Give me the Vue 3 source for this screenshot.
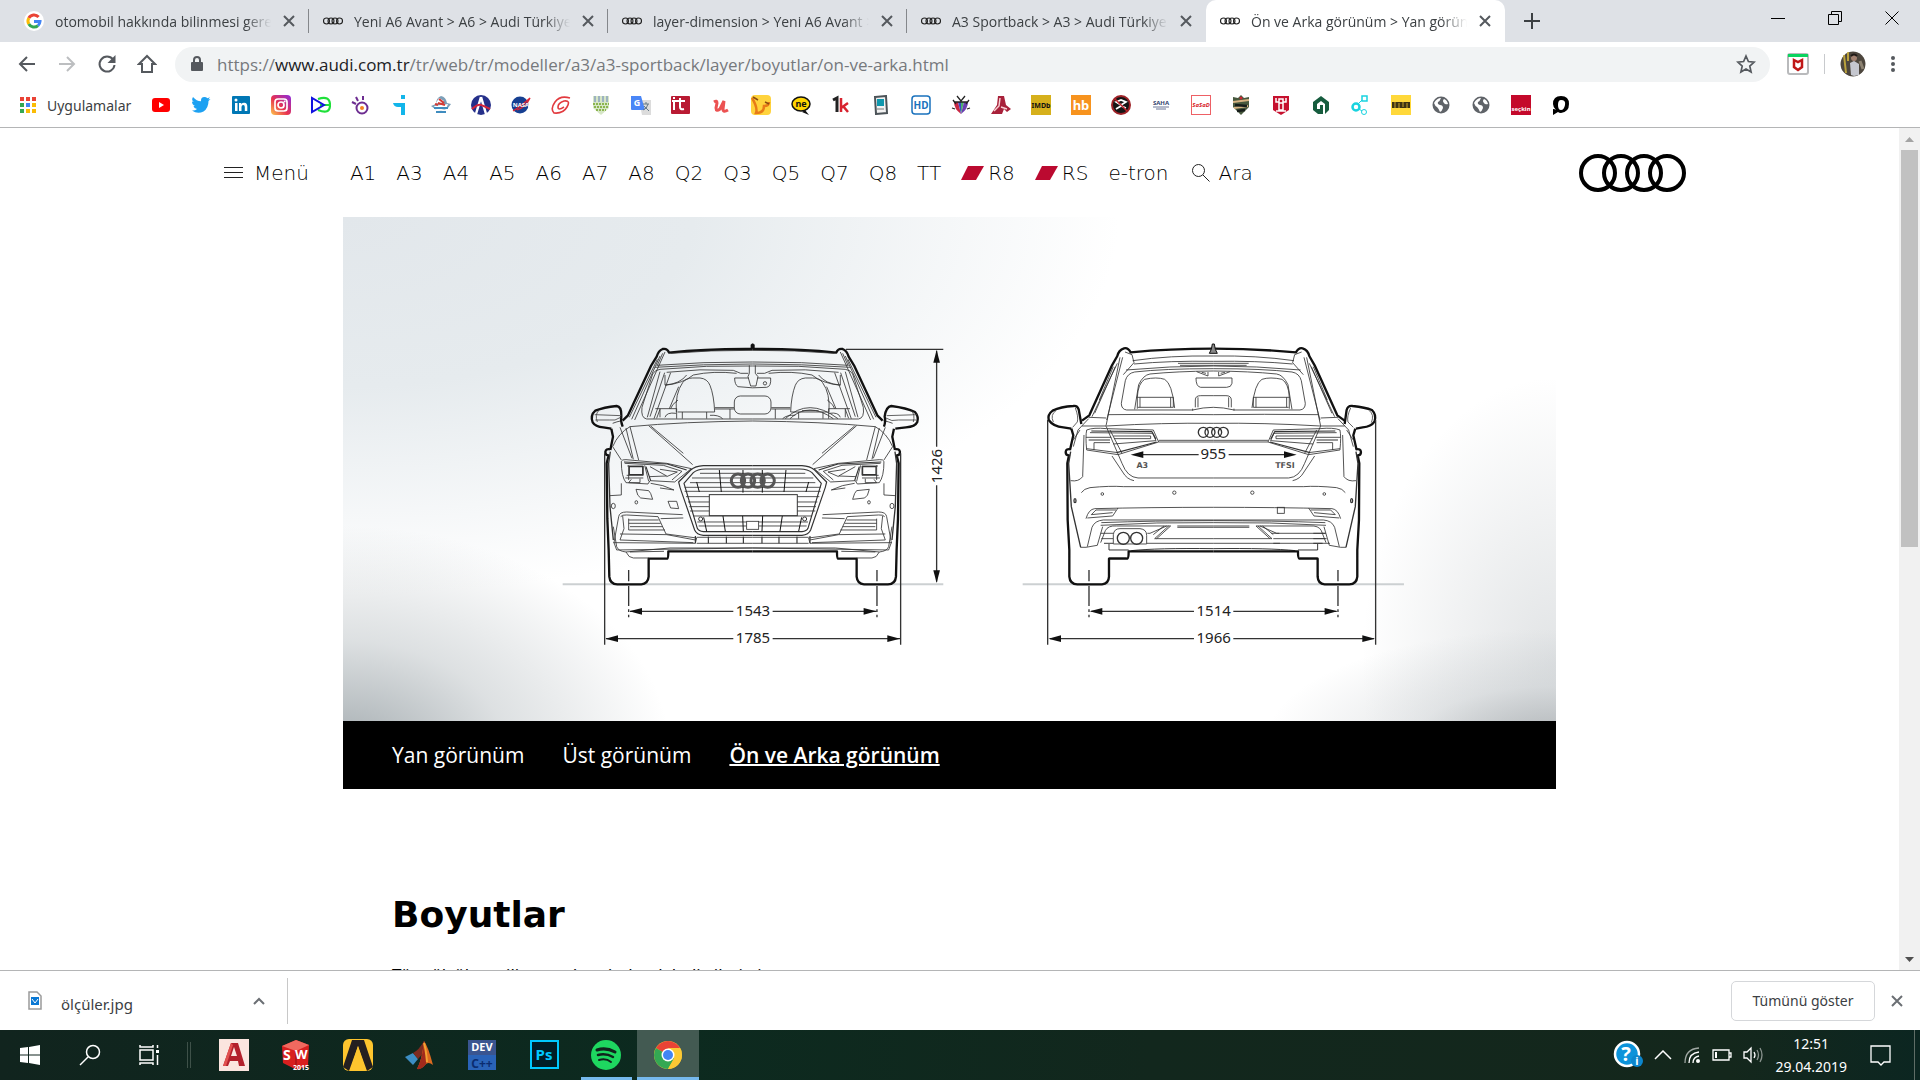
<script setup>
const rings = '<g fill="none" stroke="#222" stroke-width="1.100"><circle cx="3.500" cy="10" r="3"/><circle cx="8" cy="10" r="3"/><circle cx="12" cy="10" r="3"/><circle cx="16.500" cy="10" r="3"/></g>'
const google = '<circle cx="10" cy="10" r="10" fill="#fff"/><g fill="none" stroke-width="3"><path d="M14.6 6A6 6 0 0 0 4.8 7" stroke="#ea4335"/><path d="M4.8 7A6 6 0 0 0 4.8 13" stroke="#fbbc05"/><path d="M4.8 13A6 6 0 0 0 14 14.6" stroke="#34a853"/><path d="M14 14.6A6 6 0 0 0 16 10.5H10" stroke="#4285f4"/></g>'

const tabs = [
  { title: 'otomobil hakkında bilinmesi gereken', icon: google },
  { title: 'Yeni A6 Avant > A6 > Audi Türkiye', icon: rings },
  { title: 'layer-dimension > Yeni A6 Avant >', icon: rings },
  { title: 'A3 Sportback > A3 > Audi Türkiye', icon: rings },
  { title: 'Ön ve Arka görünüm > Yan görünüm', icon: rings, active: true }
]

const globe = '<circle cx="10" cy="10" r="8.5" fill="#5f6368"/><path d="M3 8q3-5 7-5q-1 3-3 4q-1 2 2 3q3 0 3 3q-1 3-3 4q-1-3-3-5q-2-1-3-4zM13 4q3 1 4 5q-3 1-4-1q-2-2 0-4z" fill="#fff"/>'
const label = (t, size, color, y = 13, extra = '') =>
  `<text x="10" y="${y}" font-size="${size}" font-weight="700" text-anchor="middle" fill="${color}" ${extra}>${t}</text>`

const bookmarks = [
  { name: 'YouTube', svg: '<rect x="1" y="3" width="18" height="14" rx="3" fill="#f00"/><path d="M8 7v6l5-3z" fill="#fff"/>' },
  { name: 'Twitter', svg: '<path d="M1 15.500q3 .3 5-1.500q-3-.3-3.500-3h1.500Q1 9.500 1 6.500l1.800.5Q0 5 2 2q3.500 4.200 8 4.300Q9.600 2 13.500 2q1.700 0 2.900 1.200L19 2.200l-1.700 2.300L19.500 4l-2 2Q17.500 13 12.500 16.500Q6.500 19.500 1 15.500z" fill="#1da1f2"/>' },
  { name: 'LinkedIn', svg: '<rect x="1" y="1" width="18" height="18" rx="1" fill="#0077b5"/><g fill="#fff"><circle cx="5" cy="5" r="1.500"/><path d="M4 8h2.500v8H4zM8 8h2.300v1.200q1-1.500 3-1.400q3 .2 3 3.700V16h-2.500v-4q0-2-1.600-2T10.500 12v4H8z"/></g>' },
  { name: 'Instagram', svg: '<defs><linearGradient id="ig" x1="0" y1="1" x2="1" y2="0"><stop offset="0" stop-color="#fdc94c"/><stop offset=".45" stop-color="#e8324f"/><stop offset="1" stop-color="#8a2be0"/></linearGradient></defs><rect x="0" y="0" width="20" height="20" rx="4" fill="url(#ig)"/><g fill="none" stroke="#fff" stroke-width="1.700"><rect x="4" y="4" width="12" height="12" rx="3"/><circle cx="10" cy="10" r="3"/></g><circle cx="13.600" cy="6.400" r="1" fill="#fff"/>' },
  { name: 'DE', svg: '<path d="M7 4q12-4 12 6t-12 5M9 10h10" fill="none" stroke="#1fe03a" stroke-width="2.200"/><path d="M1 3v14L13 10z" fill="none" stroke="#1212e0" stroke-width="2"/>' },
  { name: 'Ses', svg: '<g fill="none" stroke="#6d2d91" stroke-width="2"><circle cx="11" cy="13" r="5.500"/><path d="M1 7l4 2M5 2l2 4M12 1v4"/></g><circle cx="11" cy="13" r="2" fill="#f58220"/>' },
  { name: 'Teknik', svg: '<path d="M10 0h4v4h-4zM2 8h12v12h-4v-8H7q-4 0-5-4z" fill="#12b5ea"/>' },
  { name: 'Havacılık', svg: '<path d="M10 1q5 1 6 7l4 1-3 4q-6 4-13 1L0 11l5-2q0-6 5-8z" fill="#7c9fb8"/><path d="M3 11l14-2-2 5-9 2zM8 3l5 3-4 3-4-1z" fill="#fff"/><path d="M7 8l7 2M4 9l3 1M8 4l5 4" stroke="#d43a34" stroke-width="2"/><path d="M3 13h14M5 17h10" stroke="#3f8cbf" stroke-width="2"/>' },
  { name: 'Mercek', svg: '<circle cx="10" cy="10" r="10" fill="#25308a"/><path d="M10 2L5 19M10 2l5 17" fill="none" stroke="#fff" stroke-width="2.500"/><path d="M1 14q6-5 9-4t9 4" fill="none" stroke="#d4233a" stroke-width="2"/>' },
  { name: 'NASA', svg: '<circle cx="9" cy="10" r="8.500" fill="#163f91"/><path d="M2 16Q9 12 19 3q-4 9-13 12" fill="none" stroke="#e02432" stroke-width="1.300"/>' + label('NASA', 6, '#fff', 12) },
  { name: 'Yörünge', svg: '<g fill="none" stroke="#e23a3f" stroke-width="1.600"><path d="M19 3Q9 0 4 7T3 18Q12 19 16 12T13 6Q7 8 7 12T13 12"/></g>' },
  { name: 'Fakülte', svg: '<path d="M2 1h16v12l-8 7-8-7z" fill="#d6e6c6"/><path d="M4 1v6M8 1v6M12 1v6M16 1v6" stroke="#9db3c0" stroke-width="2"/><path d="M2 9h16M3 12h14M5 15h10" stroke="#8bb54e" stroke-dasharray="2 1" stroke-width="2"/>' },
  { name: 'Çeviri', svg: '<path d="M8 5h12v15H11z" fill="#dcdcdc"/><path d="M0 1h10l4 14H1q-1 0-1-1z" fill="#4a86f7"/><path d="M12 9h6M15 7v2M17 9q-1 5-5 6M13 11l5 5" stroke="#657a86" fill="none"/><text x="6" y="11" text-anchor="middle" font-size="9" font-weight="700" fill="#fff">G</text>' },
  { name: 'it', svg: '<rect x="0" y="1" width="19" height="18" rx="1" fill="#b91a33"/><path d="M3 2v2M3 7v8M1 6h13M9 3v9q0 3 4 2" stroke="#fff" stroke-width="2" fill="none"/>' },
  { name: 'Udemy', svg: '<path d="M3 7q3-2 3 1L5 13q0 4 4 1l4-8-1 8q0 4 5 1" fill="none" stroke="#ec5252" stroke-width="3"/>' },
  { name: 'Sözlük', svg: '<rect width="20" height="20" rx="4" fill="#ffd33d"/><path d="M1 3q6 10 4 15 8 0 8-7 5 0 5-4" stroke="#e77b18" fill="none" stroke-width="2.500"/><path d="M2 2l5 3M14 7l4 2" stroke="#8b4d13" stroke-width="1.500"/>' },
  { name: 'ne', svg: '<path d="M14 15l4 5-7-3z" fill="#111"/><ellipse cx="10" cy="9" rx="9" ry="7" fill="#ffd500" stroke="#111" stroke-width="1.500"/>' + label('ne', 9, '#111', 12) },
  { name: '1k', svg: '<path d="M2 5l4-2v14" fill="none" stroke="#222" stroke-width="3"/><path d="M10 3v14M17 8l-7 5M12 11l5 6" fill="none" stroke="#d8232f" stroke-width="2.500"/>' },
  { name: 'Dergi', svg: '<path d="M4 2l11-1 1 17-11 1z" fill="#f2f2f2" stroke="#4c5358" stroke-width="2"/><path d="M6 4h7v7H6z" fill="#0f97ad"/><path d="M6 14h7" stroke="#777"/>' },
  { name: 'HD', svg: '<rect x="1" y="1" width="18" height="18" rx="3" fill="#fff" stroke="#1a72bd" stroke-width="1.500"/>' + label('HD', 10, '#1a72bd', 14) },
  { name: 'TV', svg: '<path d="M3 7h4l3 12q-7-5-7-12z" fill="#c92844"/><path d="M7 7h3v12z" fill="#3c48c4"/><path d="M10 7h3l-3 12z" fill="#48b26b"/><path d="M13 7h4q0 7-7 12z" fill="#6a3fb0"/><path d="M6 1l4 5 4-5M3 7h14M1 13l3 1M19 13l-3 1M2 5l3 4M18 5l-3 4" stroke="#222" stroke-width="1.300" fill="none"/>' },
  { name: 'Mühendis', svg: '<path d="M7 1h6l2 9 5 4-4 3-3-3-2 5H0l6-9z" fill="#a8213a"/><path d="M9 3l-1 8-5 5M10 12l6 2" stroke="#f7ced2" fill="none" stroke-width="1.500"/>' },
  { name: 'IMDb', svg: '<rect y="0" width="20" height="20" fill="#d6b01c"/>' + label('IMDb', 7, '#111') },
  { name: 'hb', svg: '<rect width="20" height="20" fill="#f7931e"/>' + label('hb', 13, '#fff', 15) },
  { name: 'Kulüp', svg: '<circle cx="10" cy="10" r="9" fill="#151515" stroke="#9d2227" stroke-width="2"/><path d="M5 7l5-2 5 2-5 3zM5 14l5-3 5 2" stroke="#fff" fill="none" stroke-width="1.700"/><path d="M4 4l12 12" stroke="#c2222b" stroke-width="1.500"/>' },
  { name: 'SAHA', svg: label('SAHA', 6, '#34456f', 10) + '<path d="M2 12h16M5 14h10" stroke="#6c7797"/>' },
  { name: 'SaSaD', svg: '<rect x=".5" y=".5" width="19" height="19" fill="#fff" stroke="#ee6065"/>' + label('SaSaD', 6, '#d7232a', 12, 'font-style="italic"') },
  { name: 'Savunma', svg: '<path d="M10 0l3 3 5-1v10l-8 8-8-8V2l5 1z" fill="#47583d"/><path d="M2 7l16-2M3 13l14-2" stroke="#d8b383" stroke-width="2"/><path d="M4 10l12 1M6 16l8-1" stroke="#161d1a" stroke-width="2.500"/><circle cx="10" cy="3" r="1.500" fill="#ce2733"/>' },
  { name: 'Üniversite', svg: '<path d="M2 1h16v14l-8 5-8-5z" fill="#c6102e"/><path d="M5 3v4h3V4h4v3h3V3M8 8h4v7H8zM5 16h10" stroke="#fff" stroke-width="1.500" fill="none"/>' },
  { name: 'Ev', svg: '<path d="M10 1l8 6v8l-4 4V9l-4-3-4 3v5h3v-4h3v9H7l-5-4V7z" fill="#165c3e"/>' },
  { name: 'Bağ', svg: '<g fill="none" stroke="#18d3df"><circle cx="5" cy="12" r="3.500" stroke-width="2.500"/><rect x="11" y="1" width="5" height="5" stroke-width="1.500"/><circle cx="13" cy="17" r="2.500"/><path d="M7 9l4-4M8 14l3 2"/></g>' },
  { name: 'Arı', svg: '<rect width="20" height="20" fill="#ffd83a"/><path d="M1 7h18v6H1z" fill="#3d3313"/><path d="M4 7v6M8 8v5M12 7v5M16 8v5" stroke="#c7a22a"/>' },
  { name: 'Site 1', svg: globe },
  { name: 'Site 2', svg: globe },
  { name: 'seçkin', svg: '<rect width="20" height="20" fill="#c4092b"/>' + label('seçkin', 6, '#fff', 16) },
  { name: 'P', svg: '<path d="M10 1q8 0 8 8t-8 9q-2 0-3-1l-5 3v-6q2 0 3 1-3-3-3-6 0-8 8-8zM10 5q-3 0-3 5t3 5 4-5-4-5z" fill="#000"/>' }
]

const models = [
  { name: 'A1' }, { name: 'A3' }, { name: 'A4' }, { name: 'A5' }, { name: 'A6' }, { name: 'A7' }, { name: 'A8' },
  { name: 'Q2' }, { name: 'Q3' }, { name: 'Q5' }, { name: 'Q7' }, { name: 'Q8' }, { name: 'TT' },
  { name: 'R8', sport: true }, { name: 'RS', sport: true }, { name: 'e-tron' }
]

const views = [
  { name: 'Yan görünüm' },
  { name: 'Üst görünüm' },
  { name: 'Ön ve Arka görünüm', active: true }
]

const apps = [
  { name: 'AutoCAD', svg: '<rect x="1" width="30" height="32" fill="#fbe5df"/><path d="M5 27L13 4h7l7 23h-6l-1-5h-8l-2 5zM13 17h6l-3-9z" fill="#b3202c"/><path d="M5 27l8-23 2 2-7 21z" fill="#e2504f"/>' },
  { name: 'SolidWorks', svg: '<path d="M2 7L16 1l13 5-1 21-11 4L3 24z" fill="#d81f1f"/><path d="M2 7l14-6 13 5-13 6z" fill="#f0695f"/><path d="M16 12v18" stroke="#8e0f14"/><g fill="#fff" font-weight="700"><text x="3" y="21" font-size="14">S</text><text x="15" y="20" font-size="13">W</text><text x="13" y="31" font-size="7">2015</text></g>' },
  { name: 'ANSYS', svg: '<rect x="1" width="30" height="32" rx="6" fill="#fec52e"/><path d="M10 1h12l9 27-6 4L16 7 7 32 1 28z" fill="#241f20"/><path d="M16 7l8 25H8z" fill="#fec52e"/>' },
  { name: 'MATLAB', svg: '<path d="M1 18l8-4 5 6-5 6z" fill="#3d8ec4"/><path d="M9 14Q15 11 20 2l2 9-8 9z" fill="#7e2b20"/><path d="M20 2q4 5 9 24-5-4-8 0-3 4-8 4 5-9 7-28z" fill="#dd6b20"/><path d="M20 2q3 10 2 23-4 6-9 5 6-12 7-28z" fill="#a22a1c"/><path d="M20 4q2 7 3 19" stroke="#f4a233" stroke-width="2" fill="none"/>' },
  { name: 'Dev-C++', svg: '<rect x="2" y="1" width="28" height="30" fill="#2a63b8"/><rect x="2" y="1" width="28" height="15" fill="#3a5590"/><g font-weight="700" text-anchor="middle"><text x="16" y="12" font-size="11" fill="#fff">DEV</text><text x="16" y="29" font-size="12" fill="#0b2c70">C++</text></g>' },
  { name: 'Photoshop', svg: '<rect x="3" y="2" width="27" height="27" fill="#001d26" stroke="#00c8ff" stroke-width="2"/><text x="16" y="21" font-size="15" font-weight="700" text-anchor="middle" fill="#00c8ff">Ps</text>' },
  { name: 'Spotify', open: true, svg: '<circle cx="16" cy="16" r="15" fill="#1ed760"/><g fill="none" stroke="#10231c" stroke-linecap="round"><path d="M7 11q9-3 18 2" stroke-width="3"/><path d="M8 16q8-2 15 2" stroke-width="2.500"/><path d="M9 21q7-2 12 2" stroke-width="2"/></g>' },
  { name: 'Chrome', open: true, current: true, svg: '<circle cx="16" cy="16" r="14" fill="#fcc934"/><path d="M16 16L3.900 9A14 14 0 0 1 28.100 9z" fill="#ea4335"/><path d="M16 16L3.900 9A14 14 0 0 0 16 30l6-10.500z" fill="#34a853"/><path d="M16 9h12.100A14 14 0 0 1 16 30l6-10.500z" fill="#fcc934"/><circle cx="16" cy="16" r="6.500" fill="#fff"/><circle cx="16" cy="16" r="5" fill="#4285f4"/>' }
]
</script>

<template>
  <div class="desktop">
    <header class="tabstrip">
      <div v-for="t in tabs" :key="t.title" class="tab" :class="{ active: t.active }">
        <svg class="favicon" viewBox="0 0 20 20" v-html="t.icon" />
        <span class="tab-title">{{ t.title }}</span>
        <button class="tab-close" aria-label="Kapat">
          <svg width="12" height="12" viewBox="0 0 12 12"><path d="M1 1l10 10M11 1L1 11" stroke="#55595e" stroke-width="2" /></svg>
        </button>
      </div>
      <button class="new-tab" aria-label="Yeni sekme">
        <svg width="16" height="16" viewBox="0 0 16 16"><path d="M8 0v16M0 8h16" stroke="#3c4043" stroke-width="2" /></svg>
      </button>
      <div class="window-buttons">
        <button aria-label="Küçült"><svg width="14" height="14" viewBox="0 0 14 14"><path d="M0 7.500h14" stroke="#000" /></svg></button>
        <button aria-label="Geri yükle"><svg width="14" height="14" viewBox="0 0 14 14"><path d="M.5 3.500h10v10H.5zM3.500 3V.5h10v10H11" fill="none" stroke="#000" /></svg></button>
        <button aria-label="Kapat"><svg width="14" height="14" viewBox="0 0 14 14"><path d="M.5.5l13 13M13.500.5l-13 13" stroke="#000" /></svg></button>
      </div>
    </header>

    <div class="toolbar">
      <button class="tool" aria-label="Geri"><svg width="20" height="20" viewBox="0 0 20 20"><path d="M18 10H3M10 3l-7 7 7 7" /></svg></button>
      <button class="tool dim" aria-label="İleri"><svg width="20" height="20" viewBox="0 0 20 20"><path d="M2 10h15M10 3l7 7-7 7" /></svg></button>
      <button class="tool" aria-label="Yenile"><svg width="20" height="20" viewBox="0 0 20 20"><path d="M16 5.500A7.500 7.500 0 1 0 17.500 11" /><path d="M18.500 1v8h-8z" fill="#55595e" stroke="none" /></svg></button>
      <button class="tool" aria-label="Ana sayfa"><svg width="20" height="20" viewBox="0 0 20 20"><path d="M2 10l8-8 8 8h-3v8H5v-8z" /></svg></button>
      <div class="omnibox">
        <svg class="lock" width="12" height="16" viewBox="0 0 12 16"><rect y="6" width="12" height="9" rx="1" fill="#55595e" /><path d="M3 7V4a3 3 0 0 1 6 0v3" fill="none" stroke="#55595e" stroke-width="2" /></svg>
        <a class="url" href="#">https://<b>www.audi.com.tr</b>/tr/web/tr/modeller/a3/a3-sportback/layer/boyutlar/on-ve-arka.html</a>
        <svg class="star" width="20" height="20" viewBox="0 0 20 20"><path d="M10 2l2.400 5.500 5.800.6-4.400 4 1.300 5.900L10 15l-5.100 3 1.300-5.900-4.400-4 5.800-.6z" fill="none" stroke="#55595e" stroke-width="1.700" /></svg>
      </div>
      <svg class="shield" width="22" height="22" viewBox="0 0 22 22"><rect x="1" y="1" width="20" height="20" rx="2" fill="#fff" stroke="#b9babc" stroke-width="2" /><path d="M1 1h20v3H1z" fill="#0bd45f" /><path d="M7 7l4 2 4-2v7l-4 3-4-3z" fill="none" stroke="#c01818" stroke-width="2.500" /></svg>
      <span class="tool-divider" />
      <svg class="avatar" width="26" height="26" viewBox="0 0 26 26"><circle cx="13" cy="13" r="12.500" fill="#4d463d" /><path d="M4 4l2 18M8 1v9" stroke="#bba23c" stroke-width="2" /><path d="M10 12l4-2 5 3v11l-5 1-3-1z" fill="#c5c7cf" /><circle cx="14" cy="7" r="3" fill="#a38170" /><path d="M11 5q3-3 6 0" stroke="#201a17" stroke-width="2" fill="none" /><path d="M20 10l3 8" stroke="#8d8372" stroke-width="3" /></svg>
      <button class="kebab" aria-label="Menü"><svg width="6" height="18" viewBox="0 0 6 18" fill="#55595e"><circle cx="3" cy="3" r="2" /><circle cx="3" cy="9" r="2" /><circle cx="3" cy="15" r="2" /></svg></button>
    </div>

    <nav class="bookmarks">
      <a href="#" class="apps-link">
        <svg width="17" height="17" viewBox="0 0 17 17">
          <path d="M0 0h4v4H0zM6 0h4v4H6zM12 0h4v4h-4z" fill="#ea4335" /><path d="M0 6h4v4H0z" fill="#34a853" /><path d="M6 6h4v4H6z" fill="#4285f4" /><path d="M12 6h4v4h-4zM6 12h4v4H6zM12 12h4v4h-4z" fill="#fbbc05" /><path d="M0 12h4v4H0z" fill="#34a853" />
        </svg>
        Uygulamalar
      </a>
      <a v-for="b in bookmarks" :key="b.name" href="#" class="bookmark" :aria-label="b.name">
        <svg width="20" height="20" viewBox="0 0 20 20" v-html="b.svg" />
      </a>
    </nav>

    <div class="viewport">
      <main class="page">
        <div class="site-header">
          <button class="menu-button">
            <svg width="20" height="13" viewBox="0 0 20 13"><path d="M0 1.500h19M0 6.500h19M0 11.500h19" stroke="#222" /></svg>
            Menü
          </button>
          <nav class="models">
            <a v-for="m in models" :key="m.name" href="#">
              <svg v-if="m.sport" width="23" height="14" viewBox="0 0 23 14"><path d="M7 0h16l-8 14H0z" fill="#bb0a30" /></svg>{{ m.name }}
            </a>
          </nav>
          <button class="search">
            <svg width="18" height="18" viewBox="0 0 18 18"><g fill="none" stroke="#222"><circle cx="6.500" cy="6.500" r="6" /><path d="M11 11l6.500 6.500" /></g></svg>
            Ara
          </button>
          <a class="logo" href="#" aria-label="Audi">
            <svg width="108" height="38" viewBox="0 0 108 38"><g fill="none" stroke="#000" stroke-width="4"><circle cx="19" cy="19" r="17" /><circle cx="42" cy="19" r="17" /><circle cx="65" cy="19" r="17" /><circle cx="88" cy="19" r="17" /></g></svg>
          </a>
        </div>

        <section class="hero">
          <svg class="drawing" viewBox="0 0 1213 504" role="img" aria-label="Ön ve arka görünüm">
            <defs>
              <g id="front-half" fill="none" stroke="#333" stroke-width="2.500" stroke-linejoin="round">
                <g stroke="#111" stroke-width="7">
                  <path d="M608 87Q470 86 357 98Q352 84 338 87Q325 92 320 110L304 136L234 286L218 302" />
                  <path d="M184 326L189 350L181 390" />
                  <path d="M180 388q-12 -3 -14 8q0 10 10 10L170 430L172 596L176 690L178 770Q180 793 202 793H274Q294 792 296 770V716H352Q355 715 355 694H608" />
                </g>
                <path d="M181 395L176 430L180 560L190 660" stroke-width="4" />
                <path d="M362 100Q480 90 608 91M320 136Q460 125 608 126M314 142Q460 132 608 132M338 100L322 136M330 108L245 298M345 96L254 300M322 118L238 292" />
                <path d="M608 138Q470 135 330 148Q314 150 308 162L276 262Q272 294 290 297H608" />
                <path d="M330 155L292 292M362 158L312 296M344 158L300 290M350 157Q450 145 550 151L572 160H595M345 165V195Q390 192 410 165M345 196Q400 190 430 165Q490 152 560 160" />
                <path d="M316 266H380V296M330 266V292M495 263H552M495 267H552M540 267V296M345 292Q350 276 378 280M320 295L330 268" />
                <path d="M379 276Q375 220 398 188Q408 174 428 174H450Q472 176 480 196Q492 226 494 276H383M397 276V296M470 276V296M384 240Q364 255 362 266M386 200L358 266M480 286Q505 284 518 296" />
                <path d="M608 303Q400 305 240 320Q205 340 188 380M296 317L428 434M302 318L400 400M240 320L266 420M228 324L250 418M210 322L246 415M188 380L214 420M188 310Q200 305 216 302" />
                <path d="M214 424Q216 418 228 419L350 430L424 446L374 486L300 482L294 492L228 488Q214 470 214 424zM224 430L340 436L396 454L366 480M236 436V480M284 436L296 484M232 438H280V466H230M300 440L350 468L298 470M330 448L382 456L350 470M226 474H280M244 478L236 488H270V476M214 490V525L180 527" />
                <path d="M238 440H278V464H238zM288 440L302 482M222 426L352 432L410 450" stroke-width="3.500" />
                <path d="M608 437H460Q436 438 422 450L386 486L390 502L434 630Q440 644 460 646H608M608 447H466Q442 448 430 458L402 490L442 625Q446 634 460 635H608" stroke-width="3.500" />
                <path d="M450 460H608M426 474H608M420 488H608M404 502H608M404 514H608M408 530H478M414 546H478M418 560H478M420 573H478M430 588H608M442 606H590M446 618H590" />
                <path d="M508 450L514 516M579 450V518M440 486L448 516M461 592L470 634M519 588L526 634M578 588L580 634M475 650V670M529 650V670M580 650V670M436 648V670" stroke="#111" stroke-width="3" />
                <path d="M302 490Q340 494 372 510L330 504M258 508L296 512Q302 516 308 538L272 534Q262 530 258 508z" />
                <ellipse cx="259" cy="547" rx="4" ry="5" /><ellipse cx="190" cy="558" rx="6" ry="8" /><circle cx="452" cy="597" r="6" stroke-width="3" />
                <path d="M398 584Q310 580 230 576Q208 576 206 590L192 668L200 690L608 684M212 590Q216 584 230 585L324 590L348 642L440 654L436 670L190 668M218 588L222 626L210 660L430 668M236 596V630H345M236 600H326M236 610H332M240 620H338M332 596L400 594M210 642L350 644L436 660M190 620L200 680Q205 694 228 696L360 684L608 684M440 652H608M440 670H608M228 696Q236 714 250 714H296M240 696L342 694" />
              </g>
              <g id="rear-half" fill="none" stroke="#333" stroke-width="2.500" stroke-linejoin="round">
                <g stroke="#111" stroke-width="7">
                  <path d="M610 86Q480 86 362 97Q354 82 342 85Q326 90 322 108L306 136L238 286L216 302" />
                  <path d="M184 326L190 346L180 390" />
                  <path d="M182 388q-14 -3 -15 8q0 10 10 10L172 430L173 600L178 690V770Q180 793 202 793H276Q296 792 297 770V716H352Q356 715 356 694H610" />
                </g>
                <path d="M182 395L176 430L184 560L212 682" stroke-width="4" />
                <path d="M368 122Q480 106 610 108M372 132Q480 122 610 124M345 96L366 104L372 128L340 164M330 112L288 318L336 430Q352 472 384 474H610M338 112L290 300M322 130L246 290M316 140L254 280M310 140L268 240M504 130H610M510 136H610M348 150Q480 138 610 138" />
                <path d="M610 146Q460 146 374 156Q352 160 346 182L334 250Q334 268 350 270H548Q580 262 610 262M548 266V272M610 153Q500 154 420 162Q400 165 386 194L374 268M294 284Q460 282 610 284M290 318Q460 308 610 310" />
                <path d="M382 266V232Q384 190 404 178Q440 170 464 178Q486 190 494 264M380 232H490V262H384M390 232V262M482 232V262M556 262V240Q556 227 572 227H610M564 232V262M560 155L594 168V156M575 157L588 160" />
                <path d="M236 292L288 294M236 296L204 330L190 380M216 318L288 318M230 330Q250 322 290 326L430 330L446 366L324 404L230 390Q226 350 230 330zM240 338L428 340L438 362L310 372M310 348H422V356H312M252 390V368H300M228 352H304M222 345L218 470Q206 486 182 482M446 366H610M210 330L190 360M230 386L324 398M300 330L336 400M306 408L338 456Q350 478 372 482M446 361H610" />
                <path d="M244 333L426 335L438 358M236 360H300M320 398L440 366" stroke-width="3.500" />
                <path d="M340 500H610M214 518Q222 506 240 503Q300 497 340 500M228 596Q236 568 254 566Q420 562 610 562M324 564L308 588L232 594M244 584L258 570H318M244 584L308 578" />
                <path d="M232 680L246 622Q254 602 280 600L610 600M274 608Q430 602 610 602M272 616Q440 606 610 608M272 668L286 632Q294 616 320 618L482 618L440 656M278 620L262 676L228 682L212 682M476 618L434 656H610M470 618L420 640H412M502 618H610M502 622H610M272 640H310M274 656H310M410 670H610M462 618L430 644" />
                <path d="M297 672V690M297 690H356M297 714H350M364 692Q440 684 610 686M282 670H310" stroke="#111" />
                <ellipse cx="277" cy="522" rx="4" ry="4" /><circle cx="493" cy="518" r="5" /><ellipse cx="195" cy="542" rx="3" ry="6" stroke-width="4" />
              </g>
              <g id="arrow-left"><path d="M0 0l38 -10v20z" fill="#111" /></g>
            </defs>

            <g transform="translate(207 103) scale(0.3333)">
              <path d="M38 793H1180" stroke="#ccd0d2" stroke-width="6" />
              <use href="#front-half" /><use href="#front-half" transform="translate(1216 0) scale(-1 1)" />
              <g fill="none" stroke="#111" stroke-width="7" stroke-linejoin="round">
                <path d="M218 320Q211 302 214 287Q215 260 200 258Q162 262 136 272Q120 286 128 307Q136 320 160 322L184 326" />
                <path d="M1002 320Q1008 302 1004 290Q1008 260 1024 258Q1070 264 1095 276Q1107 290 1102 306Q1096 320 1068 322L1036 326" />
              </g>
              <path d="M134 284L214 287M136 300H178Q195 304 212 292M1102 284L1010 287M1098 300H1046Q1024 306 1008 294M146 272Q134 284 142 306M1084 272Q1096 284 1090 306" fill="none" stroke="#444" stroke-width="2.500" />
              <path d="M603 86V74q5-6 10 0v12z" fill="#111" stroke="#111" stroke-width="2" />
              <g fill="none" stroke="#333" stroke-width="2.500">
                <path d="M598 136V160L594 170 602 198H618L624 170 616 160V136M554 174H596M622 174H662Q664 200 650 202Q608 206 564 200Q554 194 554 174" /><circle cx="645" cy="190" r="5" />
                <rect x="553" y="228" width="110" height="54" rx="18" /><path d="M706 296Q776 230 864 296M720 296Q776 244 850 296M756 272H806" />
                <rect x="478" y="524" width="264" height="63" fill="#fff" stroke-width="3" /><rect x="590" y="604" width="36" height="24" fill="#fff" />
                <path d="M354 544H380L386 566L362 564z" />
                <g stroke="#555" stroke-width="9"><circle cx="564" cy="482" r="20" /><circle cx="594" cy="482" r="20" /><circle cx="623" cy="482" r="20" /><circle cx="653" cy="482" r="20" /></g>
              </g>
              <g fill="none" stroke="#333" stroke-width="4">
                <path d="M164 400V974M1052 400V974M888 88H1180M1160 92V380M1160 496V785M240 874H550M668 874H980M168 956H550M668 956H1050" />
                <path d="M236 750V892M981 750V892" stroke-dasharray="34 14 60 10 8 8" />
              </g>
              <use href="#arrow-left" transform="translate(238 874)" /><use href="#arrow-left" transform="translate(979 874) rotate(180)" />
              <use href="#arrow-left" transform="translate(166 956)" /><use href="#arrow-left" transform="translate(1050 956) rotate(180)" />
              <use href="#arrow-left" transform="translate(1160 90) rotate(90)" /><use href="#arrow-left" transform="translate(1160 789) rotate(-90)" />
              <g class="dim-label">
                <text x="609" y="887">1543</text><text x="609" y="970">1785</text>
                <text transform="translate(1175 438) rotate(-90)">1426</text>
              </g>
            </g>

            <g transform="translate(667 103) scale(0.3333)">
              <path d="M38 793H1182" stroke="#ccd0d2" stroke-width="6" />
              <use href="#rear-half" /><use href="#rear-half" transform="translate(1220 0) scale(-1 1)" />
              <g fill="none" stroke="#111" stroke-width="7" stroke-linejoin="round">
                <path d="M214 312L206 268Q202 256 190 258Q152 260 128 272Q112 284 116 300Q130 320 160 322L184 326" />
                <path d="M1004 312L1010 270Q1014 256 1028 258Q1066 262 1086 270Q1100 284 1094 304Q1084 320 1058 322L1038 326" />
              </g>
              <path d="M196 264Q206 290 202 306L188 322M138 272Q120 284 130 306M1022 264Q1010 290 1014 306L1030 322M1078 272Q1094 284 1084 308" fill="none" stroke="#444" stroke-width="2.500" />
              <path d="M604 88L607 72H613L616 88L622 100H598z" fill="#888" stroke="#111" stroke-width="3" />
              <g fill="none" stroke="#333" stroke-width="2.500">
                <path d="M558 174H666V190Q664 202 650 202H572Q558 200 558 174z" />
                <rect x="802" y="562" width="21" height="18" />
                <path d="M784 640H946M790 656H950M790 670H960" />
                <path d="M310 672V644Q312 626 330 626H390Q410 628 410 646V672z" fill="#fff" /><circle cx="340" cy="655" r="18" stroke-width="4" /><circle cx="380" cy="655" r="18" stroke-width="4" />
                <g stroke-width="4"><circle cx="580" cy="337" r="15" /><circle cx="600" cy="337" r="15" /><circle cx="620" cy="337" r="15" /><circle cx="640" cy="337" r="15" /></g>
              </g>
              <g fill="none" stroke="#333" stroke-width="4">
                <path d="M113 300V974M1097 300V974M390 404H566M656 404H830M244 874H552M670 874H980M120 956H552M670 956H1092" />
                <path d="M237 750V892M984 750V892" stroke-dasharray="34 14 60 10 8 8" />
              </g>
              <use href="#arrow-left" transform="translate(362 404)" /><use href="#arrow-left" transform="translate(860 404) rotate(180)" />
              <use href="#arrow-left" transform="translate(239 874)" /><use href="#arrow-left" transform="translate(982 874) rotate(180)" />
              <use href="#arrow-left" transform="translate(115 956)" /><use href="#arrow-left" transform="translate(1095 956) rotate(180)" />
              <g class="dim-label">
                <text x="610" y="417">955</text><text x="611" y="887">1514</text><text x="611" y="970">1966</text>
              </g>
              <g class="badge"><text x="397" y="443">A3</text><text x="825" y="443">TFSI</text></g>
            </g>
          </svg>
          <nav class="views">
            <a v-for="v in views" :key="v.name" href="#" :class="{ current: v.active }">{{ v.name }}</a>
          </nav>
        </section>

        <section class="dimensions">
          <h1>Boyutlar</h1>
          <p>Tüm ölçüler milimetre (mm) olarak belirtilmiştir.</p>
        </section>
      </main>
      <div class="scrollbar">
        <svg width="21" height="22" viewBox="0 0 21 22"><path d="M6 14l4.500-5 4.500 5z" fill="#a3a3a3" /></svg>
        <div class="thumb" />
        <svg width="21" height="22" viewBox="0 0 21 22"><path d="M6 9l4.500 5L15 9z" fill="#505050" /></svg>
      </div>
    </div>

    <aside class="downloads">
      <div class="download">
        <svg width="14" height="20" viewBox="0 0 14 20"><path d="M1 1h8l4 4v13H1z" fill="#fff" stroke="#9b9b9b" stroke-width="1.500" /><path d="M3 6h8v8H3z" fill="#0a78d4" /><path d="M4 8l3 4 3-4" stroke="#fff" fill="none" /></svg>
        <span>ölçüler.jpg</span>
        <button aria-label="Seçenekler"><svg width="12" height="8" viewBox="0 0 12 8"><path d="M1 7l5-5 5 5" fill="none" stroke="#6b6f74" stroke-width="2" /></svg></button>
      </div>
      <button class="show-all">Tümünü göster</button>
      <button class="close-bar" aria-label="Kapat"><svg width="12" height="12" viewBox="0 0 12 12"><path d="M1 1l10 10M11 1L1 11" stroke="#6b6f74" stroke-width="2" /></svg></button>
    </aside>

    <footer class="taskbar">
      <button class="start" aria-label="Başlat"><svg width="20" height="20" viewBox="0 0 20 20" fill="#fff"><path d="M0 3l8-1v7.500H0zM9 2l11-2v9.500H9zM0 10.500h8V18l-8-1zM9 10.500h11V20L9 18z" /></svg></button>
      <button class="start" aria-label="Ara"><svg width="22" height="22" viewBox="0 0 22 22"><g fill="none" stroke="#fff" stroke-width="1.500"><circle cx="14" cy="8" r="6.500" /><path d="M9 13l-8 8" /></g></svg></button>
      <button class="start" aria-label="Görev görünümü"><svg width="22" height="20" viewBox="0 0 22 20"><g fill="none" stroke="#fff" stroke-width="1.500"><path d="M1 5h13v10H1zM1 0v2h13V0M1 20v-2h13v2M18.500 0v3M18.500 10v10" /></g><path d="M17 5h3v3h-3z" fill="#fff" /></svg></button>
      <span class="task-divider" />
      <button v-for="a in apps" :key="a.name" class="app" :class="{ open: a.open, current: a.current }" :aria-label="a.name">
        <svg width="32" height="32" viewBox="0 0 32 32" v-html="a.svg" />
      </button>
      <div class="tray">
        <svg width="30" height="30" viewBox="0 0 30 30"><circle cx="14" cy="14" r="12" fill="#0c93da" stroke="#fff" stroke-width="2.500" /><text x="13" y="21" font-size="20" font-weight="700" text-anchor="middle" fill="#fff">?</text><circle cx="24" cy="21" r="6" fill="#0c86cd" /><text x="24" y="25" font-size="11" font-weight="700" text-anchor="middle" fill="#fff">i</text></svg>
        <svg width="18" height="10" viewBox="0 0 18 10"><path d="M1 9l8-8 8 8" fill="none" stroke="#fff" stroke-width="1.500" /></svg>
        <svg width="18" height="18" viewBox="0 0 18 18"><g fill="none" stroke="#fff" stroke-width="1.300"><path d="M2 17Q2 3 16 2" opacity=".6" /><path d="M6 17Q6 7 16 6M10 17q0-6 6-7" /></g><circle cx="15" cy="15" r="2" fill="#fff" /></svg>
        <svg width="20" height="12" viewBox="0 0 20 12"><path d="M1 1h16v10H1zM17 4h2v4h-2" fill="none" stroke="#fff" stroke-width="1.300" /><path d="M3 3h2v6H3z" fill="#fff" /></svg>
        <svg width="21" height="18" viewBox="0 0 21 18"><g fill="none" stroke="#fff" stroke-width="1.300"><path d="M1 6h3l4-4v14l-4-4H1zM11 6q2 3 0 6" /><path d="M14 4q3 5 0 10M17 2q4 7 0 14" opacity=".5" /></g></svg>
        <div class="clock"><span>12:51</span><span>29.04.2019</span></div>
        <svg width="22" height="21" viewBox="0 0 22 21"><path d="M1 1h19v16h-6l-3 3-3-3H1z" fill="none" stroke="#fff" stroke-width="1.300" /></svg>
        <span class="peek" />
      </div>
    </footer>
  </div>
</template>

<style>
body { margin: 0; }
</style>

<style scoped>
.desktop {
  display: flex;
  flex-direction: column;
  height: 100vh;
  overflow: hidden;
  background: #fff;
  color: #3c4043;
  font-family: "Noto Sans", "Open Sans", sans-serif;
}
button {
  display: flex;
  align-items: center;
  justify-content: center;
  padding: 0;
  border: 0;
  background: none;
  color: inherit;
  font: inherit;
}
a { color: inherit; text-decoration: none; }
svg { display: block; flex: none; }

.tabstrip {
  display: flex;
  height: 42px;
  padding-left: 10px;
  background: #dee1e6;
  font-family: "Open Sans", "Noto Sans", sans-serif;
  font-size: 14px;
}
.tab {
  display: flex;
  align-items: center;
  box-sizing: border-box;
  width: 299px;
  padding: 0 12px 0 14px;
  position: relative;
}
.tab::after {
  content: "";
  position: absolute;
  right: 0;
  top: 9px;
  height: 24px;
  border-right: 1px solid #84878b;
}
.tab:nth-child(4)::after, .tab.active::after { display: none; }
.tab.active { background: #fff; border-radius: 10px 10px 0 0; }
.favicon { width: 20px; height: 20px; }
.tab-title {
  flex: 1;
  margin: 0 10px 0 11px;
  overflow: hidden;
  white-space: nowrap;
  mask-image: linear-gradient(90deg, #000 88%, transparent);
}
.tab-close { width: 16px; height: 16px; }
.new-tab { width: 54px; }
.window-buttons { display: flex; margin-left: auto; }
.window-buttons button { width: 57px; height: 36px; }

.toolbar {
  display: flex;
  align-items: center;
  height: 44px;
  padding: 0 24px 0 7px;
}
.tool { width: 40px; height: 36px; }
.tool svg { fill: none; stroke: #55595e; stroke-width: 2; }
.tool.dim svg { stroke: #bcbec0; }
.omnibox {
  display: flex;
  align-items: center;
  flex: 1;
  height: 35px;
  margin-left: 8px;
  padding: 0 14px 0 16px;
  border-radius: 18px;
  background: #f1f3f4;
}
.url { flex: 1; margin-left: 14px; font-family: "Open Sans", "Noto Sans", sans-serif; font-size: 17px; color: #76797d; }
.url b { font-weight: 400; color: #202124; }
.shield { margin-left: 17px; }
.tool-divider { width: 1px; height: 20px; margin: 0 15px; background: #c8cacd; }
.kebab { margin-left: 24px; width: 6px; }
.avatar { border-radius: 50%; }

.bookmarks {
  display: flex;
  align-items: center;
  height: 38px;
  padding: 0 20px 3px;
  border-bottom: 1px solid #b4b5b6;
}
.apps-link { display: flex; align-items: center; gap: 10px; width: 121px; font-size: 14px; }
.bookmark { display: flex; justify-content: center; width: 40px; }

.viewport { display: flex; flex: 1; min-height: 0; overflow: hidden; }
.page { flex: 1; min-width: 0; overflow: hidden; color: #000; }
.scrollbar { display: flex; flex-direction: column; width: 21px; background: #f1f1f1; }
.thumb { width: 17px; height: 397px; margin: 0 auto auto; background: #c1c1c1; }

.site-header {
  display: flex;
  align-items: center;
  height: 89px;
  padding: 0 212px 0 224px;
  font-family: "DejaVu Sans", sans-serif;
  font-size: 20px;
  font-weight: 200;
}
.menu-button { gap: 10px; margin-right: 41px; }
.models { display: flex; gap: 20px; }
.models a { display: flex; align-items: center; gap: 4px; }
.search { gap: 8px; margin-left: 24px; }
.logo { margin-left: auto; }

.hero {
  max-width: 1213px;
  margin: 0 auto;
  background:
    radial-gradient(ellipse 27% 40% at 0% 94%, rgba(140, 150, 155, 0.8), rgba(170, 178, 182, 0.4) 50%, transparent),
    radial-gradient(ellipse 24% 20% at 100% 92%, rgba(150, 156, 160, 0.7), rgba(180, 186, 190, 0.3) 50%, transparent),
    radial-gradient(ellipse 16% 50% at 100% 78%, rgba(180, 186, 190, 0.4), transparent),
    radial-gradient(ellipse 64% 66% at 0% 0%, #e2e7eb, #e6ebee 45%, transparent),
    #fff;
}
.drawing { width: 100%; height: auto; font-family: "Noto Sans", sans-serif; }
.dim-label { font-size: 45px; text-anchor: middle; fill: #222; }
.badge { font-family: "DejaVu Sans", sans-serif; font-size: 24px; font-weight: 700; text-anchor: middle; fill: #555; }
.views {
  display: flex;
  align-items: center;
  gap: 38px;
  height: 68px;
  padding-left: 49px;
  background: #000;
  color: #fff;
  font-family: "Open Sans", "Noto Sans", sans-serif;
  font-size: 21px;
}
.views .current { font-weight: 600; text-decoration: underline; text-decoration-thickness: 2px; }

.dimensions { max-width: 1213px; box-sizing: border-box; margin: 0 auto; padding: 104px 49px 0; }
.dimensions h1 {
  margin: 0;
  font-family: "DejaVu Sans", sans-serif;
  font-size: 36px;
  line-height: 44px;
  font-weight: 700;
}
.dimensions p { margin: 26px 0 0; font-size: 17px; line-height: 24px; white-space: nowrap; }

.downloads {
  display: flex;
  align-items: center;
  height: 59px;
  border-top: 1px solid #b4b5b6;
  padding-right: 16px;
}
.download {
  display: flex;
  align-items: center;
  box-sizing: border-box;
  width: 288px;
  height: 46px;
  padding: 0 22px 0 28px;
  border-right: 1px solid #c8c8c8;
}
.download span { flex: 1; margin-left: 19px; padding-top: 6px; font-size: 15px; }
.show-all {
  width: 144px;
  height: 40px;
  margin-left: auto;
  border: 1px solid #d5d7da;
  border-radius: 5px;
  font-size: 14px;
}
.close-bar { width: 14px; margin-left: 15px; }

.taskbar {
  display: flex;
  align-items: center;
  height: 50px;
  background: linear-gradient(90deg, #11241e, #0c2a1f 35%, #12271d 60%, #14271c 90%, #0c2621);
  color: #fff;
}
.start { width: 60px; height: 50px; }
.task-divider { width: 2px; height: 26px; margin: 0 12px 0 7px; border: solid #3e5149; border-width: 0 1px; }
.app { position: relative; width: 62px; height: 50px; }
.app.open::after { content: ""; position: absolute; left: 6px; right: 5px; bottom: 0; height: 3px; background: #76b9ed; }
.app.current { background: #435a52; }
.app.current::after { left: 0; right: 0; }
.tray { display: flex; align-items: center; height: 50px; margin-left: auto; gap: 11px; }
.clock { display: flex; flex-direction: column; align-items: center; font-size: 14px; line-height: 23px; }
.tray .clock { margin: 0 12px 0 0; }
.peek { width: 5px; height: 50px; margin-left: 11px; border-left: 1px solid #5f6d66; }
</style>
